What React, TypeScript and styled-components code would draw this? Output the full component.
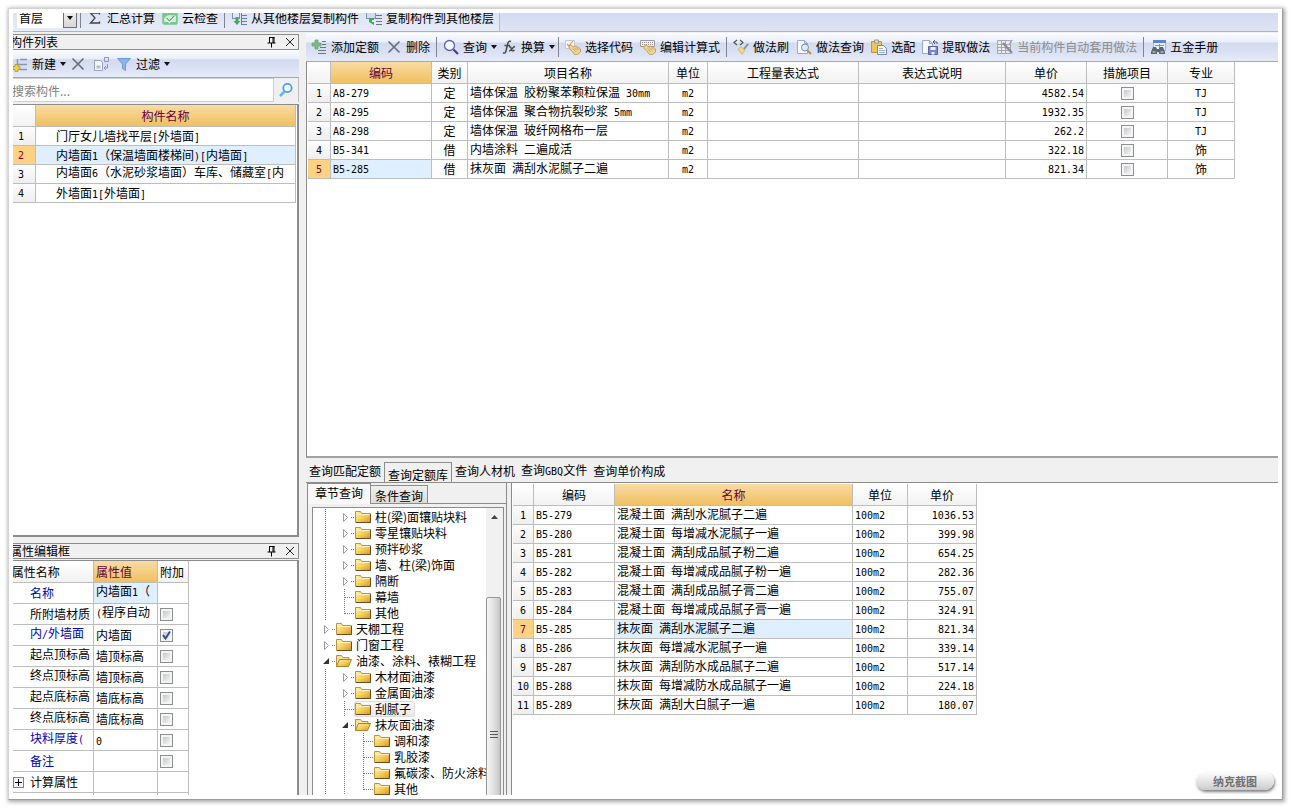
import React from 'react';
import styled, { createGlobalStyle, css } from 'styled-components';

const cjk = '"Noto Sans CJK SC", sans-serif';
const line = '#bdbdbd';
const edge = '#8c8c8c';
const barFill = 'linear-gradient(#fbfcfe 0%, #e9eef9 32%, #d2daef 36%, #dde3f4 75%, #e6ebf8 100%)';
const goldFill = 'linear-gradient(#f9dba3, #f0c061)';

const Global = createGlobalStyle`
  * { box-sizing: border-box; }
  body { margin: 0; background: #fff; }
  #root { min-height: 100vh; padding: 8px; }
  body, button, input, select, table {
    font-family: ${cjk};
    font-size: 12px;
    line-height: 16px;
    color: #000;
  }
  button { border: 0; background: none; padding: 0; white-space: nowrap; }
`;

/* ---------- frame ---------- */

const Frame = styled.div`
  position: relative;
  height: calc(100vh - 16px);
  padding: 4px;
  background: #fff;
  border: 1px solid;
  border-color: #d4d4d4 #9a9a9a #9a9a9a #d4d4d4;
  box-shadow: 1px 1px 4px 1px rgba(0, 0, 0, 0.35);
`;

const Viewport = styled.div`
  height: 100%;
  overflow: hidden;
`;

const Shell = styled.div`
  display: flex;
  flex-direction: column;
  height: calc(100% + 8px);
  margin: -8px 0 0 -6px;
  background: #f0f0f0;
`;

const Watermark = styled.button`
  position: absolute;
  right: 8px;
  bottom: 9px;
  width: 78px;
  height: 18px;
  border-radius: 9px;
  background: linear-gradient(#fdfdfd, #dcdcdc 70%, #c9c9c9);
  box-shadow: 1px 2px 3px rgba(0, 0, 0, 0.5);
  color: #707070;
  font-size: 11px;
  font-weight: 700;
`;

/* ---------- toolbars ---------- */

const MainBar = styled.div`
  display: flex;
  flex: 0 0 27px;
  background: linear-gradient(#cfd7ec, #dfe4f5);
  border-bottom: 1px solid #a9b1cc;
`;

const MainTools = styled.div`
  display: flex;
  align-items: center;
  gap: 1px;
  padding: 0 2px 0 10px;
  background: linear-gradient(#d6def0, #e8ecf8);
  border-right: 1px solid #b4bbd2;
`;

const ToolBar = styled.div<{ $h: number }>`
  display: flex;
  align-items: center;
  gap: 1px;
  flex: 0 0 ${(p) => p.$h}px;
  padding-left: 2px;
  background: ${barFill};
  border-bottom: 1px solid #a3a8b5;
`;

const Tool = styled.button<{ $menu?: boolean }>`
  display: flex;
  align-items: center;
  gap: 4px;
  height: 22px;
  padding: 0 ${(p) => (p.$menu ? 0 : 3)}px 0 3px;
  &:disabled { color: #8d8d8d; }
`;

const MenuTool = styled.span`
  display: flex;
  align-items: center;
  gap: 4px;
`;

const Caret = styled.span`
  width: 6px;
  border: solid transparent;
  border-width: 4px 3px 0;
  border-top-color: #111;
`;

const Sep = styled.span`
  width: 1px;
  height: 20px;
  margin: 0 2px;
  background: #7e8291;
`;

const Combo = styled.label`
  position: relative;
  display: flex;
  width: 60px;
  height: 20px;
`;

const ComboBox = styled.select`
  appearance: none;
  flex: 1;
  height: 20px;
  padding: 0 0 0 2px;
  border: 0;
  border-radius: 0;
  background: #fff;
`;

const ComboArrow = styled.span`
  position: absolute;
  top: 0;
  right: 0;
  bottom: 0;
  width: 14px;
  display: flex;
  align-items: center;
  justify-content: center;
  background: linear-gradient(#f6f6f6, #d6d6d6);
  border: 1px solid #707070;
  pointer-events: none;
`;

/* ---------- panes ---------- */

const Body = styled.div`
  display: flex;
  gap: 7px;
  flex: 1;
  min-height: 0;
`;

const Left = styled.div`
  display: flex;
  flex-direction: column;
  flex: 0 0 292px;
  min-height: 0;
  padding-top: 2px;
`;

const Right = styled.div`
  display: flex;
  flex-direction: column;
  flex: 1;
  min-width: 0;
  min-height: 0;
  padding-top: 1px;
`;

const TitleBar = styled.div`
  display: flex;
  align-items: center;
  gap: 6px;
  flex: 0 0 16px;
  padding: 0 2px;
  border: 1px solid ${edge};
`;

const Title = styled.h2`
  flex: 1;
  margin: 0;
  font-size: 12px;
  line-height: 14px;
  font-weight: 400;
`;

const TitleButton = styled.button`
  width: 12px;
  height: 12px;
  display: flex;
`;

const SearchRow = styled.div`
  display: flex;
  align-items: center;
  flex: 0 0 24px;
  border-right: 1px solid ${line};
`;

const SearchInput = styled.input`
  flex: 1;
  height: 24px;
  padding: 0 4px;
  border: 1px solid #c9ced8;
  border-radius: 0;
  background: #fff;
  &::placeholder { color: #808080; opacity: 1; }
`;

const SearchButton = styled.button`
  width: 24px;
  height: 22px;
  display: flex;
  align-items: center;
  justify-content: center;
`;

const ListPanel = styled.div`
  flex: 1;
  min-height: 0;
  margin-top: 2px;
  overflow: hidden;
  background: #fff;
  border: 1px solid ${edge};
  border-width: 1px 2px 2px 0;
`;

const PropsPane = styled.div`
  display: flex;
  flex-direction: column;
  flex: 0 0 252px;
  margin-top: 6px;
  overflow: hidden;
`;

const PropsPanel = styled.div`
  flex: 1;
  min-height: 0;
  margin-top: 1px;
  background: #fff;
  border: 1px solid ${edge};
  border-width: 1px 2px 0 0;
`;

const QuotaPanel = styled.div`
  flex: 1;
  min-height: 0;
  overflow: hidden;
  padding-left: 1px;
  background: #fff;
  border-left: 1px solid ${edge};
  border-bottom: 2px solid #a2a2a2;
`;

const QueryPane = styled.div`
  display: flex;
  flex-direction: column;
  flex: 0 0 337px;
  min-height: 0;
`;

/* ---------- tables ---------- */

const Grid = styled.table<{ $row: number }>`
  table-layout: fixed;
  width: 0;
  border-collapse: separate;
  border-spacing: 0;
  th, td {
    height: ${(p) => p.$row}px;
    padding: 0 2px;
    overflow: hidden;
    white-space: nowrap;
    font-weight: 400;
    border-right: 1px solid ${line};
    border-bottom: 1px solid ${line};
  }
  thead th { height: 22px; }
`;

const Head = styled.th<{ $gold?: boolean; $align?: string }>`
  text-align: ${(p) => p.$align ?? 'center'};
  background: ${(p) => (p.$gold ? goldFill : 'linear-gradient(#fff, #f2f2f2)')};
  color: ${(p) => (p.$gold ? '#64003c' : '#000')};
`;

const RowNo = styled.th<{ $on?: boolean }>`
  text-align: center;
  background: ${(p) => (p.$on ? '#ffd183' : 'linear-gradient(#fdfdfd, #eeeeee)')};
  color: ${(p) => (p.$on ? '#7a0030' : '#000')};
`;

const Cell = styled.td<{ $align?: string; $on?: boolean; $pad?: number; $blue?: boolean }>`
  text-align: ${(p) => p.$align ?? 'left'};
  background: ${(p) => (p.$on ? '#dfefff' : '#fff')};
  color: ${(p) => (p.$blue ? '#0000b4' : '#000')};
  ${(p) => p.$pad !== undefined && css`&&& { padding-left: ${p.$pad}px; }`}
`;

const Clip = styled.div<{ $top?: boolean }>`
  height: 18px;
  line-height: ${(p) => (p.$top ? 14 : 18)}px;
  overflow: hidden;
`;

const Latin = styled.span`
  font-family: "DejaVu Sans Mono", monospace;
  font-size: 10px;
  white-space: pre;
`;

const Check = styled.input`
  appearance: none;
  display: block;
  width: 13px;
  height: 13px;
  margin: 0;
  padding: 2px;
  border: 1px solid #8e8f8f;
  background: linear-gradient(135deg, #c4c9ce, #f4f4f4) content-box, #f4f4f4;
`;

const TickBox = styled.label<{ $left?: boolean }>`
  position: relative;
  display: block;
  width: 13px;
  margin: ${(p) => (p.$left ? '0' : '0 auto')};
`;

const Tick = styled.svg`
  position: absolute;
  top: 1px;
  left: 1px;
  pointer-events: none;
`;

const Expand = styled.button`
  width: 11px;
  height: 11px;
  margin: 0 6px;
  border: 1px solid #808080;
  background: #f4f4f4;
  display: flex;
`;

const Branch = styled.div`
  display: flex;
  align-items: center;
`;

/* ---------- tabs ---------- */

const TabStrip = styled.div`
  display: flex;
  align-items: flex-start;
  flex: 0 0 24px;
  padding-top: 4px;
  border-bottom: 1px solid ${edge};
`;

const Tab = styled.button<{ $on?: boolean }>`
  height: 17px;
  padding: 0 3px;
  ${(p) =>
    p.$on &&
    css`
      height: 20px;
      padding-top: 4px;
      border: 1px solid ${edge};
      border-bottom: 0;
    `}
`;

const QueryBody = styled.div`
  display: flex;
  flex: 1;
  min-height: 0;
`;

const TreePane = styled.div`
  display: flex;
  flex-direction: column;
  flex: 0 0 200px;
  margin-left: 1px;
  min-width: 0;
  min-height: 0;
  border-left: 1px solid ${edge};
  border-right: 1px solid ${edge};
`;

const SubTabs = styled.div`
  display: flex;
  align-items: flex-end;
  flex: 0 0 21px;
`;

const SubTab = styled.button<{ $on?: boolean }>`
  height: 19px;
  padding: 2px 4px 0;
  border: 1px solid ${edge};
  border-left: 0;
  background: linear-gradient(#f0f0f0, #dcdcdc);
  ${(p) =>
    p.$on &&
    css`
      height: 21px;
      padding: 0 7px 2px;
      border-bottom: 0;
      background: #f8f8f8;
    `}
`;

const SubTabRest = styled.div`
  flex: 1;
  border-bottom: 1px solid ${edge};
`;

const TreeBox = styled.div`
  display: flex;
  flex: 1;
  min-height: 0;
  margin: 3px 2px 0 4px;
  overflow: hidden;
  background: #fff;
  border: 1px solid ${edge};
  border-bottom: 0;
`;

const Tree = styled.ul`
  flex: 1;
  min-width: 0;
  margin: 0;
  padding: 1px 0 0 3px;
  list-style: none;
  overflow: hidden;
`;

const TreeRow = styled.li`
  display: flex;
  align-items: center;
  height: 16px;
  white-space: nowrap;
  svg { flex-shrink: 0; }
`;

const NodeLabel = styled.span<{ $on?: boolean }>`
  display: flex;
  align-items: center;
  gap: 4px;
  height: 16px;
  padding: 0 4px 0 1px;
  border-radius: 3px;
  ${(p) => p.$on && css`
    background: linear-gradient(#fafafa, #e8e8e8);
    box-shadow: inset 0 0 0 1px #dcdcdc;
  `}
`;

const Scroll = styled.div`
  flex: 0 0 17px;
  overflow: hidden;
  background: #f1f1f1;
`;

const ScrollUp = styled.button`
  display: flex;
  width: 16px;
  height: 17px;
  align-items: center;
  justify-content: center;
`;

const Thumb = styled.div`
  display: flex;
  align-items: center;
  justify-content: center;
  height: 276px;
  margin: 72px 2px 0 0;
  border: 1px solid #979797;
  border-radius: 2px;
  background: linear-gradient(90deg, #f5f5f5, #e2e2e2 50%, #c6c6c9);
`;

const ResultPanel = styled.div`
  flex: 1;
  min-width: 0;
  margin-left: 4px;
  overflow: hidden;
  padding: 1px 0 0 1px;
  background: #fff;
  border-left: 1px solid ${edge};
`;

/* ---------- icons ---------- */

const Rules = ({ x = 9, c = '#6c7486' }) => (
  <path d={`M${x} 2.5h6M${x} 5.5h6M${x} 8.5h6M${x} 11.5h6M${x} 14.5h6`} stroke={c} />
);
const Page = ({ x = 1 }) => (
  <path d={`M${x + 0.5} 1.5h7l3 3v10h-10z M${x + 7.5} 1.5v3h3`} fill="#f6f9fe" stroke="#9aabc6" />
);
const Hand = () => (
  <>
    <path d="M4 7l2-1 3 2 2-1 4.500 3v3l-3 2.500h-3l-3-4-2.500-2z" fill="#efd491" stroke="#b9984e" strokeWidth=".8" />
    <path d="M7.500 9.500l3 3M9 8.500l3 3M11 8.500l2.500 2" stroke="#b9984e" strokeWidth=".7" />
  </>
);

const glyphs: Record<string, React.ReactNode> = {
  sigma: <path d="M12.500 4.500v-1.500h-9l4.500 5-4.500 5h9v-1.500" fill="none" stroke="#3c4250" strokeWidth="1.300" />,
  cloud: (
    <>
      <rect x=".5" y="1.500" width="15" height="13" rx="2" fill="#79c590" stroke="#8fd0a2" />
      <path d="M2 9c2-5 8-5 12-2v5H2z" fill="#cdebd5" />
      <path d="M4 8l3.500 3.500 5.500-6" fill="none" stroke="#fff" strokeWidth="2.600" />
      <path d="M4.500 8l3 3 5-5.500" fill="none" stroke="#4fae6c" strokeWidth="1.200" />
    </>
  ),
  copyFrom: (
    <>
      <rect x="1.500" y="1.500" width="7" height="7" fill="#dfe8f7" stroke="#7f92b4" />
      <Rules x={10} c="#5d7fc0" />
      <path d="M10.500 2v13" stroke="#5d7fc0" />
      <path d="M4.500 7h3v4h2L6 15l-3.500-4h2z" fill="#43a95c" />
    </>
  ),
  copyTo: (
    <>
      <rect x=".5" y="2.500" width="9" height="6" fill="#cfdcf2" stroke="#7f92b4" />
      <Rules x={10} />
      <path d="M3 8h5v2H6v2h2v3l-5-3z" fill="#43a95c" />
    </>
  ),
  fresh: (
    <>
      <path d="M8 3.500h7M5 8.500h10M8 13.500h7M5.500 3v9" stroke="#8396b8" strokeWidth="1.500" />
      <path d="M3 8.500h3v2h2v3H6v2H3v-2H1v-3h2z" fill="#f1cf45" stroke="#b8932a" strokeWidth=".8" />
    </>
  ),
  cross: <path d="M2.500 2.500l11 11M13.500 2.500l-11 11" stroke="#6a6d75" strokeWidth="1.600" />,
  duplicate: (
    <>
      <path d="M1.500 4.500h6l2 2v8h-8z" fill="#f4f6fa" stroke="#9aa3b8" />
      <path d="M3.500 12.500h4v-3h-4z" fill="#b4bccd" />
      <path d="M11.500 5.500v-4h4v4zM14.500 8v4h-3m1.500-2l-2 2 2 2" fill="none" stroke="#8b96c4" />
    </>
  ),
  funnel: <path d="M1.500 2.500h13L9.500 8v6.500l-3-2V8z" fill="#8db6e8" stroke="#6b9bd8" />,
  addRow: (
    <>
      <path d="M4 1h3v3h3v3H7v3H4V7H1V4h3z" fill="#79b985" stroke="#6aa878" strokeWidth=".8" />
      <path d="M11 2.500h4M11 5.500h4M9 8.500h6M7 11.500h8M7 14.500h8" stroke="#6f7682" />
    </>
  ),
  find: (
    <>
      <circle cx="6.500" cy="6.500" r="5" fill="#f5f8ff" stroke="#5c60b0" strokeWidth="1.300" />
      <path d="M10.500 10.500l4.500 4.500" stroke="#3a3f98" strokeWidth="2.200" />
    </>
  ),
  fx: (
    <path
      d="M10 2.500c-2-1-3 .5-3.500 3L5 12c-.5 2-1.500 2.500-3 1.800M3.500 6.500h5.500M8 8c2-1 2 1 2.500 2.500s1.500 2 3 .5M14 7.500c-2 0-3.500 4.500-6 4.500"
      fill="none"
      stroke="#4a4a4a"
      strokeWidth="1.500"
    />
  ),
  pick: (
    <>
      <path d="M.5 1.500h9v8h-9z" fill="#fbfbfb" stroke="#c6c6c6" />
      <path d="M2 5l2 2 4-5" fill="none" stroke="#d9907f" strokeWidth="1.200" />
      <Hand />
    </>
  ),
  keys: (
    <>
      <path d="M.5 1.500h14v6h-14z" fill="#f1f1f1" stroke="#9b9b9b" />
      <path d="M2 3.500h11M2 5.500h11" stroke="#8a8a8a" strokeDasharray="1 1" />
      <Hand />
    </>
  ),
  brush: (
    <>
      <path d="M4 1L1 3.500 4 6M7 1l3 2.500L7 6" fill="none" stroke="#555" strokeWidth="1.200" />
      <path d="M15 5l-4 5" stroke="#8a8fa0" strokeWidth="2" />
      <path d="M5 10l3-2 4 3-3 4.500z" fill="#f1d786" stroke="#cfb068" strokeWidth=".8" />
    </>
  ),
  pageFind: (
    <>
      <Page />
      <circle cx="9" cy="8.500" r="3.500" fill="#dcebfa" stroke="#7c8ca8" />
      <path d="M11.500 11.500l3.500 3.500" stroke="#c58a4a" strokeWidth="2" />
    </>
  ),
  paste: (
    <>
      <path d="M.5 2.500h10v11H.5z" fill="#edc55a" stroke="#b9984e" />
      <path d="M3.500 1h4v3h-4z" fill="#d8dbe2" stroke="#888" strokeWidth=".8" />
      <path d="M6.500 6.500h6l3 3v6h-9z" fill="#f3f6fb" stroke="#7a89a8" />
      <path d="M8 9.500h4M8 11.500h6M8 13.500h6" stroke="#9fb0cc" />
    </>
  ),
  extract: (
    <>
      <Page x={0} />
      <path d="M15 5V3h-4m2-2l-2 2 2 2" fill="none" stroke="#555c70" />
      <path d="M6.500 7.500h9v8h-9z" fill="#7d86c9" stroke="#5a62a4" />
      <path d="M8.500 8h5v3h-5zM9.500 13h3v2.500h-3z" fill="#eef0fa" />
    </>
  ),
  auto: (
    <>
      <path d="M.5 1.500h13v13H.5zM.5 5.500h13M.5 8.500h13M.5 11.500h13M4.500 1.500v13M8.500 1.500v13" fill="#ececee" stroke="#a5a7ae" />
      <path d="M6 4l9 10" stroke="#8a8c94" strokeWidth="2.400" />
      <path d="M15 1l-3 5" stroke="#a5a7ae" strokeWidth="1.500" />
    </>
  ),
  manual: (
    <>
      <path d="M3.500 1.500h12v10h-12z" fill="#e9f0fb" stroke="#9db4da" />
      <path d="M3 1h13v3H3z" fill="#5b86d6" />
      <path d="M5 6.500h9M9.500 5v5" stroke="#7d93bb" />
      <path d="M3 8h3l1 2h2l1-2h3l2 5v2H9v-2H7v2H1v-2z" fill="#5e6670" />
      <path d="M2.500 13h3M10.500 13h3" stroke="#dfe3e8" />
    </>
  ),
  lens: (
    <>
      <circle cx="9.500" cy="6" r="4.200" fill="#eef7ff" stroke="#4fa0e4" strokeWidth="1.800" />
      <path d="M6.500 9.500L2 14" stroke="#6db4ee" strokeWidth="2.600" />
    </>
  ),
  folder: (
    <>
      <path d="M.5 13.500v-11h5l1.500 2h8.500v9z" fill="url(#gold)" stroke="#b3944a" />
      <path d="M1 13.500h14.500V5" stroke="#6b4e18" />
      <path d="M1.500 5.500h13" stroke="#fff2b8" />
    </>
  ),
  folderOpen: (
    <>
      <path d="M.5 13.500v-11h5l1.500 2h6v2" fill="#f6e29a" stroke="#b3944a" />
      <path d="M.5 13.500l3-7h12l-3 7z" fill="url(#gold)" stroke="#a8842c" />
    </>
  ),
};

const Icon = ({ name }: { name: string }) => (
  <svg width="16" height="16" viewBox="0 0 16 16" fill="none" aria-hidden="true">
    {glyphs[name]}
  </svg>
);

const Defs = () => (
  <svg width="0" height="0" aria-hidden="true" display="block">
    <linearGradient id="gold" x1="0" y1="0" x2="1" y2="1">
      <stop offset="0" stopColor="#fff3b4" />
      <stop offset=".5" stopColor="#f7cf58" />
      <stop offset="1" stopColor="#d8942a" />
    </linearGradient>
  </svg>
);

const Pin = () => (
  <svg width="12" height="12" viewBox="0 0 12 12">
    <path d="M3 1.500h5.500M3.500 1v6M8 1v6M7 1v6M1.500 7h8M5.500 7v4.500" stroke="#000" fill="none" />
  </svg>
);
const Close = () => (
  <svg width="12" height="12" viewBox="0 0 12 12">
    <path d="M2 2l8 8M10 2l-8 8" stroke="#222" />
  </svg>
);

/* ---------- helpers ---------- */

/* Chinese stays full width; digits and Latin letters are set half as wide. */
const mixed = (text: string) =>
  text.split(/([\x20-\x7e]+)/).map((part, i) => (i % 2 ? <Latin key={i}>{part}</Latin> : part));

const Cols = ({ w }: { w: number[] }) => (
  <colgroup>
    {w.map((n, i) => (
      <col key={i} width={n} />
    ))}
  </colgroup>
);

const ToolButton = ({ icon, text, menu, off }: { icon: string; text?: string; menu?: boolean; off?: boolean }) => (
  <Tool $menu={menu} disabled={off} aria-label={text ?? icon}>
    <Icon name={icon} />
    {menu ? (
      <MenuTool>
        {text}
        <Caret />
      </MenuTool>
    ) : (
      text
    )}
  </Tool>
);

const CheckBox = ({ label, on, left }: { label: string; on?: boolean; left?: boolean }) => (
  <TickBox $left={left}>
    <Check type="checkbox" aria-label={label} defaultChecked={on} />
    {on && (
      <Tick width="11" height="11" viewBox="0 0 11 11">
        <path d="M2 5l2.500 3.500L9 1.500" fill="none" stroke="#2f4f9c" strokeWidth="2" />
      </Tick>
    )}
  </TickBox>
);

const PaneTitle = ({ text }: { text: string }) => (
  <TitleBar>
    <Title>{text}</Title>
    <TitleButton aria-label="固定">
      <Pin />
    </TitleButton>
    <TitleButton aria-label="关闭">
      <Close />
    </TitleButton>
  </TitleBar>
);

/* ---------- data ---------- */

const parts = [
  '门厅女儿墙找平层[外墙面]',
  '内墙面1（保温墙面楼梯间)[内墙面]',
  '内墙面6（水泥砂浆墙面）车库、储藏室[内',
  '外墙面1[外墙面]',
];

type Prop = { name: string; value: string; blue?: boolean; nameTop?: boolean; valueTop?: boolean; check?: boolean };
const props: Prop[] = [
  { name: '名称', value: '内墙面1（', blue: true, valueTop: true },
  { name: '所附墙材质', value: '(程序自动', valueTop: true, check: false },
  { name: '内/外墙面', value: '内墙面', blue: true, nameTop: true, check: true },
  { name: '起点顶标高', value: '墙顶标高', nameTop: true, check: false },
  { name: '终点顶标高', value: '墙顶标高', nameTop: true, check: false },
  { name: '起点底标高', value: '墙底标高', nameTop: true, check: false },
  { name: '终点底标高', value: '墙底标高', nameTop: true, check: false },
  { name: '块料厚度(', value: '0', blue: true, nameTop: true, check: false },
  { name: '备注', value: '', blue: true, check: false },
];

const quotas = [
  ['A8-279', '定', '墙体保温 胶粉聚苯颗粒保温 30mm', '4582.54', 'TJ'],
  ['A8-295', '定', '墙体保温 聚合物抗裂砂浆 5mm', '1932.35', 'TJ'],
  ['A8-298', '定', '墙体保温 玻纤网格布一层', '262.2', 'TJ'],
  ['B5-341', '借', '内墙涂料 二遍成活', '322.18', '饰'],
  ['B5-285', '借', '抹灰面 满刮水泥腻子二遍', '821.34', '饰'],
];

const results = [
  ['B5-279', '混凝土面 满刮水泥腻子二遍', '1036.53'],
  ['B5-280', '混凝土面 每增减水泥腻子一遍', '399.98'],
  ['B5-281', '混凝土面 满刮成品腻子粉二遍', '654.25'],
  ['B5-282', '混凝土面 每增减成品腻子粉一遍', '282.36'],
  ['B5-283', '混凝土面 满刮成品腻子膏二遍', '755.07'],
  ['B5-284', '混凝土面 每增减成品腻子膏一遍', '324.91'],
  ['B5-285', '抹灰面 满刮水泥腻子二遍', '821.34'],
  ['B5-286', '抹灰面 每增减水泥腻子一遍', '339.14'],
  ['B5-287', '抹灰面 满刮防水成品腻子二遍', '517.14'],
  ['B5-288', '抹灰面 每增减防水成品腻子一遍', '224.18'],
  ['B5-289', '抹灰面 满刮大白腻子一遍', '180.07'],
];

type Kind = 'closed' | 'open' | 'leaf' | 'last';
const nodes: [number, Kind, string][] = [
  [1, 'closed', '柱(梁)面镶贴块料'],
  [1, 'closed', '零星镶贴块料'],
  [1, 'closed', '预拌砂浆'],
  [1, 'closed', '墙、柱(梁)饰面'],
  [1, 'closed', '隔断'],
  [1, 'leaf', '幕墙'],
  [1, 'last', '其他'],
  [0, 'closed', '天棚工程'],
  [0, 'closed', '门窗工程'],
  [0, 'open', '油漆、涂料、裱糊工程'],
  [1, 'closed', '木材面油漆'],
  [1, 'closed', '金属面油漆'],
  [1, 'leaf', '刮腻子'],
  [1, 'open', '抹灰面油漆'],
  [2, 'leaf', '调和漆'],
  [2, 'leaf', '乳胶漆'],
  [2, 'leaf', '氟碳漆、防火涂料'],
  [2, 'last', '其他'],
];

const joints: Record<Kind | 'guide', React.ReactNode> = {
  guide: <path d="M9.500 0v16" strokeDasharray="1 1" stroke="#777" />,
  leaf: <path d="M9.500 0v16M10 8.500h9" strokeDasharray="1 1" stroke="#777" />,
  last: <path d="M9.500 0v9M10 8.500h9" strokeDasharray="1 1" stroke="#777" />,
  closed: (
    <>
      <path d="M8.500 4.500v8l4-4z" fill="#fff" stroke="#9a9a9a" />
      <path d="M16 8.500h3" strokeDasharray="1 1" stroke="#777" />
    </>
  ),
  open: (
    <>
      <path d="M13 5v6H7z" fill="#333" />
      <path d="M16 8.500h3" strokeDasharray="1 1" stroke="#777" />
    </>
  ),
};

const Joint = ({ kind }: { kind: Kind | 'guide' }) => (
  <svg width="19" height="16" viewBox="0 0 19 16" fill="none" aria-hidden="true">
    {joints[kind]}
  </svg>
);

/* ---------- page ---------- */

export default function App() {
  return (
    <>
      <Global />
      <Frame>
        <Viewport>
          <Shell>
            <Defs />
            <MainBar>
              <MainTools>
                <Combo>
                  <ComboBox aria-label="楼层">
                    <option>首层</option>
                  </ComboBox>
                  <ComboArrow>
                    <Caret />
                  </ComboArrow>
                </Combo>
                <Sep />
                <ToolButton icon="sigma" text="汇总计算" />
                <ToolButton icon="cloud" text="云检查" />
                <Sep />
                <ToolButton icon="copyFrom" text="从其他楼层复制构件" />
                <ToolButton icon="copyTo" text="复制构件到其他楼层" />
              </MainTools>
            </MainBar>
            <Body>
              <Left>
                <PaneTitle text="构件列表" />
                <ToolBar $h={28}>
                  <ToolButton icon="fresh" text="新建" menu />
                  <ToolButton icon="cross" />
                  <ToolButton icon="duplicate" />
                  <ToolButton icon="funnel" text="过滤" menu />
                </ToolBar>
                <SearchRow>
                  <SearchInput aria-label="搜索构件" placeholder="搜索构件..." />
                  <SearchButton aria-label="搜索">
                    <Icon name="lens" />
                  </SearchButton>
                </SearchRow>
                <ListPanel>
                  <Grid $row={19}>
                    <Cols w={[29, 260]} />
                    <thead>
                      <tr>
                        <Head />
                        <Head $gold>构件名称</Head>
                      </tr>
                    </thead>
                    <tbody>
                      {parts.map((p, i) => (
                        <tr key={p}>
                          <RowNo $on={i === 1}>{mixed(String(i + 1))}</RowNo>
                          <Cell $pad={20} $on={i === 1}>
                            <Clip $top={i === 2}>{mixed(p)}</Clip>
                          </Cell>
                        </tr>
                      ))}
                    </tbody>
                  </Grid>
                </ListPanel>
                <PropsPane>
                  <PaneTitle text="属性编辑框" />
                  <PropsPanel>
                    <Grid $row={21}>
                      <Cols w={[87, 64, 31]} />
                      <thead>
                        <tr>
                          <Head $align="left">&nbsp;属性名称</Head>
                          <Head $align="left" $gold>属性值</Head>
                          <Head $align="left">附加</Head>
                        </tr>
                      </thead>
                      <tbody>
                        {props.map((p, i) => (
                          <tr key={p.name}>
                            <Cell $pad={23} $blue={p.blue}>
                              <Clip $top={p.nameTop}>{mixed(p.name)}</Clip>
                            </Cell>
                            <Cell $on={i === 0}>
                              <Clip $top={p.valueTop}>{mixed(p.value)}</Clip>
                            </Cell>
                            <Cell>{p.check !== undefined && <CheckBox left label={p.name} on={p.check} />}</Cell>
                          </tr>
                        ))}
                        <tr>
                          <Cell $pad={0}>
                            <Branch>
                              <Expand aria-label="展开">
                                <svg width="9" height="9" viewBox="0 0 9 9">
                                  <path d="M1 4.500h7M4.500 1v7" stroke="#000" />
                                </svg>
                              </Expand>
                              计算属性
                            </Branch>
                          </Cell>
                          <Cell />
                          <Cell />
                        </tr>
                        <tr>
                          <Cell />
                          <Cell />
                          <Cell />
                        </tr>
                      </tbody>
                    </Grid>
                  </PropsPanel>
                </PropsPane>
              </Left>
              <Right>
                <ToolBar $h={29}>
                  <ToolButton icon="addRow" text="添加定额" />
                  <ToolButton icon="cross" text="删除" />
                  <Sep />
                  <ToolButton icon="find" text="查询" menu />
                  <ToolButton icon="fx" text="换算" menu />
                  <Sep />
                  <ToolButton icon="pick" text="选择代码" />
                  <ToolButton icon="keys" text="编辑计算式" />
                  <Sep />
                  <ToolButton icon="brush" text="做法刷" />
                  <ToolButton icon="pageFind" text="做法查询" />
                  <ToolButton icon="paste" text="选配" />
                  <ToolButton icon="extract" text="提取做法" />
                  <ToolButton icon="auto" text="当前构件自动套用做法" off />
                  <Sep />
                  <ToolButton icon="manual" text="五金手册" />
                </ToolBar>
                <QuotaPanel>
                  <Grid $row={19}>
                    <Cols w={[23, 101, 36, 201, 39, 151, 147, 81, 81, 67]} />
                    <thead>
                      <tr>
                        <Head />
                        <Head $gold>编码</Head>
                        {['类别', '项目名称', '单位', '工程量表达式', '表达式说明', '单价', '措施项目', '专业'].map((h) => (
                          <Head key={h}>{h}</Head>
                        ))}
                      </tr>
                    </thead>
                    <tbody>
                      {quotas.map(([code, kind, name, price, field], i) => (
                        <tr key={code}>
                          <RowNo $on={i === 4}>{mixed(String(i + 1))}</RowNo>
                          <Cell $on={i === 4}>{mixed(code)}</Cell>
                          <Cell $align="center">{kind}</Cell>
                          <Cell>{mixed(name)}</Cell>
                          <Cell $align="center">{mixed('m2')}</Cell>
                          <Cell />
                          <Cell />
                          <Cell $align="right">{mixed(price)}</Cell>
                          <Cell>
                            <CheckBox label={`${code} 措施项目`} />
                          </Cell>
                          <Cell $align="center">{mixed(field)}</Cell>
                        </tr>
                      ))}
                    </tbody>
                  </Grid>
                </QuotaPanel>
                <QueryPane>
                  <TabStrip role="tablist">
                    {['查询匹配定额', '查询定额库', '查询人材机', '查询GBQ文件', '查询单价构成'].map((t, i) => (
                      <Tab key={t} role="tab" aria-selected={i === 1} $on={i === 1}>
                        {mixed(t)}
                      </Tab>
                    ))}
                  </TabStrip>
                  <QueryBody>
                    <TreePane>
                      <SubTabs role="tablist">
                        <SubTab role="tab" aria-selected $on>章节查询</SubTab>
                        <SubTab role="tab" aria-selected={false}>条件查询</SubTab>
                        <SubTabRest />
                      </SubTabs>
                      <TreeBox>
                        <Tree>
                          {nodes.map(([depth, kind, name], i) => (
                            <TreeRow key={i}>
                              {Array.from({ length: depth }, (_, d) => (
                                <Joint key={d} kind="guide" />
                              ))}
                              <Joint kind={kind} />
                              <NodeLabel $on={name === '刮腻子'}>
                                <Icon name={kind === 'open' ? 'folderOpen' : 'folder'} />
                                {name}
                              </NodeLabel>
                            </TreeRow>
                          ))}
                        </Tree>
                        <Scroll>
                          <ScrollUp aria-label="向上滚动">
                            <svg width="7" height="4" viewBox="0 0 7 4">
                              <path d="M0 4l3.500-4L7 4z" fill="#444" />
                            </svg>
                          </ScrollUp>
                          <Thumb>
                            <svg width="8" height="8" viewBox="0 0 8 8">
                              <path d="M0 .5h8M0 3.500h8M0 6.500h8" stroke="#555" />
                            </svg>
                          </Thumb>
                        </Scroll>
                      </TreeBox>
                    </TreePane>
                    <ResultPanel>
                      <Grid $row={19}>
                        <Cols w={[21, 81, 238, 55, 69]} />
                        <thead>
                          <tr>
                            <Head />
                            <Head>编码</Head>
                            <Head $gold>名称</Head>
                            <Head>单位</Head>
                            <Head>单价</Head>
                          </tr>
                        </thead>
                        <tbody>
                          {results.map(([code, name, price], i) => (
                            <tr key={code}>
                              <RowNo $on={i === 6}>{mixed(String(i + 1))}</RowNo>
                              <Cell>{mixed(code)}</Cell>
                              <Cell $on={i === 6}>{mixed(name)}</Cell>
                              <Cell>{mixed('100m2')}</Cell>
                              <Cell $align="right">{mixed(price)}</Cell>
                            </tr>
                          ))}
                        </tbody>
                      </Grid>
                    </ResultPanel>
                  </QueryBody>
                </QueryPane>
              </Right>
            </Body>
          </Shell>
        </Viewport>
        <Watermark>纳克截图</Watermark>
      </Frame>
    </>
  );
}
